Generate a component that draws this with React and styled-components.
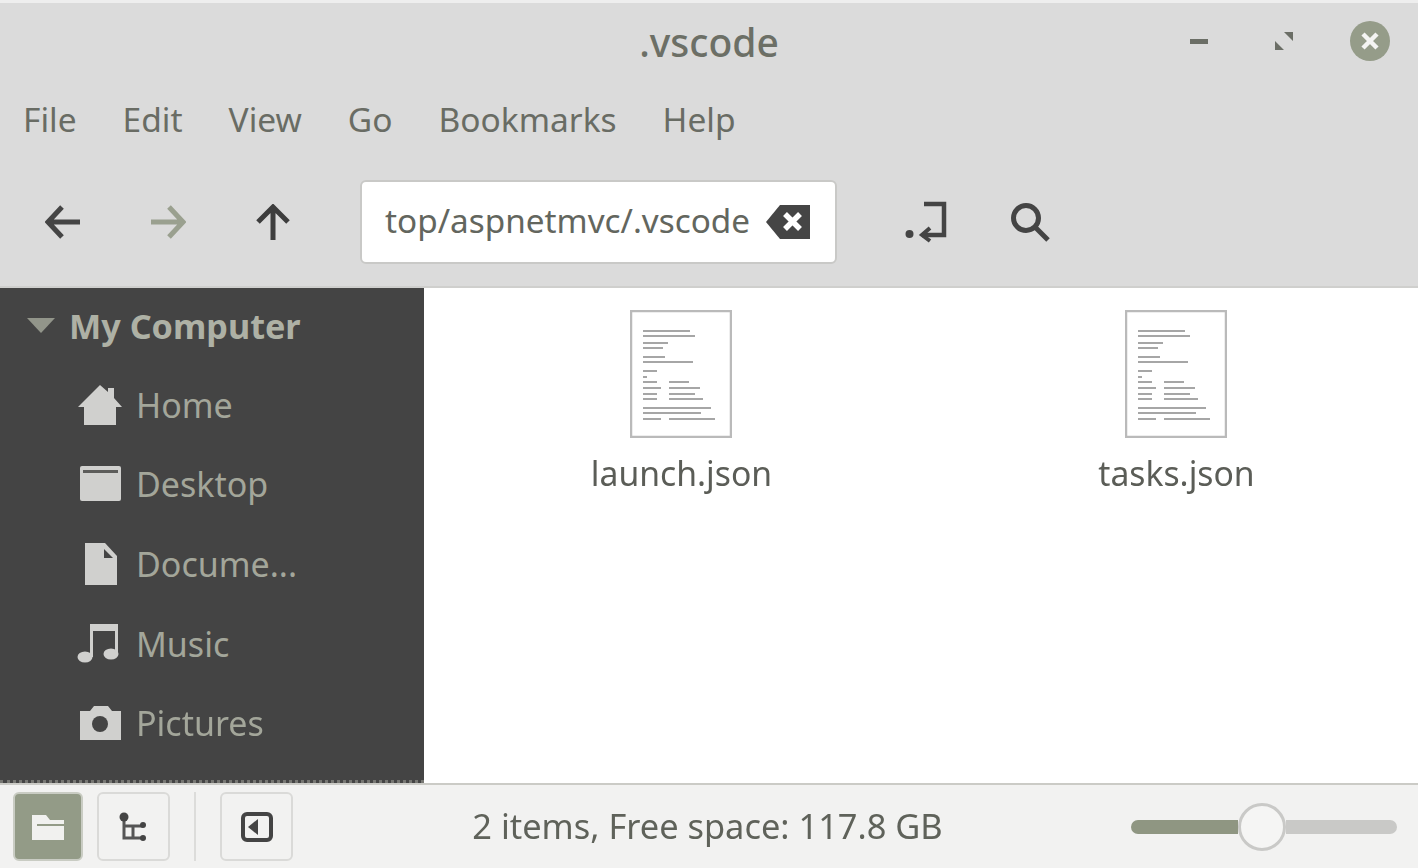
import styled, { createGlobalStyle } from "styled-components";

const GlobalStyle = createGlobalStyle`
  html, body {
    margin: 0;
    padding: 0;
    height: 100%;
    overflow: hidden;
  }
  #root {
    height: 100%;
  }
  * {
    box-sizing: border-box;
  }
`;

const menuItems = ["File", "Edit", "View", "Go", "Bookmarks", "Help"];
const docLines = [
  [13, 21, 47], [13, 26, 52], [13, 33, 25], [13, 38, 20],
  [13, 47, 22], [13, 52, 50],
  [13, 61, 14], [13, 67, 4],
  [13, 72, 14], [39, 72, 20], [13, 78, 18], [39, 78, 31],
  [13, 84, 14], [39, 84, 26], [13, 89, 14], [39, 89, 34],
  [13, 98, 68], [13, 103, 58], [13, 109, 18], [39, 109, 46],
];

function BackIcon() {
  return (
    <svg width="36" height="36" viewBox="0 0 36 36" fill="none" stroke="#454545" strokeWidth="5">
      <path d="M35 18H4M17 3 3 18l14 15" />
    </svg>
  );
}

function ForwardIcon() {
  return (
    <svg width="36" height="36" viewBox="0 0 36 36" fill="none" stroke="#9aa08f" strokeWidth="5">
      <path d="M1 18h31M19 3l14 15-14 15" />
    </svg>
  );
}

function UpIcon() {
  return (
    <svg width="36" height="36" viewBox="0 0 36 36" fill="none" stroke="#3d3d3d" strokeWidth="5">
      <path d="M18 36V4M3 18 18 3l15 15" />
    </svg>
  );
}

function ClearIcon() {
  return (
    <svg width="46" height="36" viewBox="0 0 46 36">
      <path d="M15 1h30v34H15L1 18z" fill="#454545" />
      <path d="M20 10l15 15M35 10 20 25" stroke="#fff" strokeWidth="5.5" />
    </svg>
  );
}

function ToggleIcon() {
  return (
    <svg width="42" height="42" viewBox="0 0 42 42" fill="none" stroke="#444" strokeWidth="4.5">
      <path d="M19 3h20v31H17" />
      <path d="M25 27l-8 7 8 6" strokeWidth="4" />
      <circle cx="4.5" cy="33" r="4" fill="#444" stroke="none" />
    </svg>
  );
}

function SearchIcon() {
  return (
    <svg width="42" height="42" viewBox="0 0 42 42" fill="none" stroke="#444" strokeWidth="5">
      <circle cx="17" cy="17" r="12.5" />
      <path d="M26 26l13 13" />
    </svg>
  );
}

function HomeIcon() {
  return (
    <svg width="46" height="42" viewBox="0 0 46 42" fill="#d0d0ce">
      <path d="M23 1l8 7V4h6v10l8 9h-6v18H7V23H1z" />
    </svg>
  );
}

function DesktopIcon() {
  return (
    <svg width="46" height="42" viewBox="0 0 46 42">
      <rect x="3" y="3" width="41" height="35" rx="2" fill="#d0d0ce" />
      <rect x="6" y="7" width="35" height="3" fill="#5c5c5a" />
    </svg>
  );
}

function DocumentIcon() {
  return (
    <svg width="46" height="42" viewBox="0 0 46 42" fill="#d0d0ce">
      <path d="M8 0h20l12 13v29H8z" />
      <path d="M27 6v9h9z" fill="#444" />
    </svg>
  );
}

function MusicIcon() {
  return (
    <svg width="46" height="42" viewBox="0 0 46 42" fill="#d0d0ce">
      <path d="M13 1h28v30h-3V8H16v26h-3z" />
      <ellipse cx="8" cy="34" rx="7.5" ry="5.5" />
      <ellipse cx="34" cy="31" rx="7.5" ry="5.5" />
    </svg>
  );
}

function CameraIcon() {
  return (
    <svg width="46" height="42" viewBox="0 0 46 42">
      <path d="M3 9h10l4-5h14l4 5h9v29H3z" fill="#d0d0ce" />
      <circle cx="23" cy="22" r="8" fill="#444" />
    </svg>
  );
}

function FolderIcon() {
  return (
    <svg width="34" height="28" viewBox="0 0 34 28" fill="#f1f1ef">
      <path d="M1 2h14l4 5h14v20H1z" />
      <path d="M6 12h27" stroke="#939b87" strokeWidth="2" />
    </svg>
  );
}

function TreeIcon() {
  return (
    <svg width="30" height="30" viewBox="0 0 30 30" fill="none" stroke="#555" strokeWidth="3">
      <path d="M5 5v21h19M5 14h19M14 14v12" />
      <circle cx="5" cy="5" r="4.5" fill="#444" stroke="none" />
      <circle cx="24" cy="13" r="3" fill="#444" stroke="none" />
      <circle cx="24" cy="26" r="3" fill="#444" stroke="none" />
    </svg>
  );
}

function PaneIcon() {
  return (
    <svg width="32" height="30" viewBox="0 0 32 30">
      <rect x="2" y="2" width="28" height="26" rx="4" fill="none" stroke="#444" strokeWidth="4" />
      <path d="M17 7v16L7 15z" fill="#444" />
    </svg>
  );
}

function DocThumb() {
  return (
    <svg width="102" height="128" viewBox="0 0 102 128">
      <rect x="1" y="1" width="100" height="126" fill="#fff" stroke="#bababa" strokeWidth="2.5" />
      {docLines.map(([x, y, w], i) => (
        <rect key={i} x={x} y={y - 1} width={w} height="2" fill="#a6a6a6" />
      ))}
    </svg>
  );
}

const places = [
  { name: "Home", icon: <HomeIcon /> },
  { name: "Desktop", icon: <DesktopIcon /> },
  { name: "Docume...", icon: <DocumentIcon /> },
  { name: "Music", icon: <MusicIcon /> },
  { name: "Pictures", icon: <CameraIcon /> },
];

export default function App() {
  return (
    <Window>
      <GlobalStyle />
      <Header>
        <TitleBar>
          <span />
          <Title>.vscode</Title>
          <WindowControls>
            <Minimize />
            <svg width="18" height="18" viewBox="0 0 18 18" fill="#6b6e66">
              <path d="M9 0h9v9zM9 18H0V9z" />
            </svg>
            <CloseButton>
              <svg width="20" height="20" viewBox="0 0 20 20" stroke="#f4f4f2" strokeWidth="4.5">
                <path d="M3 3l14 14M17 3 3 17" />
              </svg>
            </CloseButton>
          </WindowControls>
        </TitleBar>
        <MenuBar>
          {menuItems.map((item) => (
            <MenuItem key={item}>{item}</MenuItem>
          ))}
        </MenuBar>
        <Toolbar>
          <NavButton><BackIcon /></NavButton>
          <NavButton><ForwardIcon /></NavButton>
          <NavButton><UpIcon /></NavButton>
          <PathBar>
            <PathText>top/aspnetmvc/.vscode</PathText>
            <ClearIcon />
          </PathBar>
          <ToolButton><ToggleIcon /></ToolButton>
          <ToolButton><SearchIcon /></ToolButton>
        </Toolbar>
      </Header>
      <Body>
        <Sidebar>
          <SectionRow>
            <Caret />
            <SectionName>My Computer</SectionName>
          </SectionRow>
          {places.map((place) => (
            <PlaceRow key={place.name}>
              {place.icon}
              <PlaceName>{place.name}</PlaceName>
            </PlaceRow>
          ))}
        </Sidebar>
        <FileGrid>
          <FileItem>
            <DocThumb />
            <FileName>launch.json</FileName>
          </FileItem>
          <FileItem>
            <DocThumb />
            <FileName>tasks.json</FileName>
          </FileItem>
        </FileGrid>
      </Body>
      <Footer>
        <FooterTools>
          <PaneButton $active><FolderIcon /></PaneButton>
          <PaneButton><TreeIcon /></PaneButton>
          <FooterDivider />
          <PaneButton><PaneIcon /></PaneButton>
        </FooterTools>
        <Status>2 items, Free space: 117.8 GB</Status>
        <ZoomSlider>
          <ZoomFill />
          <ZoomThumb />
          <ZoomRest />
        </ZoomSlider>
      </Footer>
    </Window>
  );
}

const Window = styled.div`
  display: flex;
  flex-direction: column;
  height: 100vh;
  font-family: "Noto Sans", sans-serif;
  background-color: #ffffff;
  /* the reference is a soft, upscaled capture */
  filter: blur(0.7px);
`;

const Header = styled.header`
  height: 288px;
  flex-shrink: 0;
  background-color: #dbdbdb;
  border-top: 3px solid #eeeeee;
  border-bottom: 2px solid #cfcfcd;
`;

const TitleBar = styled.div`
  display: grid;
  grid-template-columns: 1fr auto 1fr;
  align-items: center;
  height: 76px;
  padding: 0 28px;
`;

const Title = styled.h1`
  margin: 0;
  font-size: 39px;
  font-weight: 500;
  color: #6c6f66;
`;

const WindowControls = styled.div`
  display: flex;
  align-items: center;
  justify-content: flex-end;
  gap: 57px;
`;

const Minimize = styled.span`
  width: 18px;
  height: 5px;
  margin-right: 10px;
  background-color: #6b6e66;
`;

const CloseButton = styled.span`
  display: flex;
  align-items: center;
  justify-content: center;
  width: 40px;
  height: 40px;
  border-radius: 50%;
  background-color: #959c89;
`;

const MenuBar = styled.nav`
  display: flex;
  align-items: center;
  gap: 46px;
  height: 80px;
  padding-left: 23px;
`;

const MenuItem = styled.span`
  font-size: 33.5px;
  color: #696c64;
`;

const Toolbar = styled.div`
  display: flex;
  align-items: center;
  height: 125px;
  padding-left: 45px;
`;

const NavButton = styled.span`
  display: flex;
  margin-right: 69px;
`;

const PathBar = styled.div`
  display: flex;
  align-items: center;
  justify-content: space-between;
  width: 477px;
  height: 84px;
  margin-right: 68px;
  padding: 0 24px 0 23px;
  background-color: #ffffff;
  border: 2px solid #c9c9c7;
  border-radius: 6px;
`;

const PathText = styled.span`
  margin-bottom: 3px;
  font-size: 33.3px;
  white-space: nowrap;
  color: #63665e;
`;

const ToolButton = styled.span`
  display: flex;
  margin-right: 62px;
`;

const Body = styled.main`
  display: flex;
  flex: 1;
  min-height: 0;
`;

const Sidebar = styled.aside`
  width: 424px;
  flex-shrink: 0;
  padding-top: 6px;
  background-color: #444444;
  border-bottom: 3px dotted #777773;
`;

const SectionRow = styled.div`
  display: flex;
  align-items: center;
  gap: 14px;
  height: 62px;
  padding-left: 27px;
`;

const Caret = styled.span`
  width: 0;
  height: 0;
  border-left: 14px solid transparent;
  border-right: 14px solid transparent;
  border-top: 15px solid #92958a;
`;

const SectionName = styled.span`
  font-size: 34.2px;
  font-weight: 700;
  color: #aeb1a5;
`;

const PlaceRow = styled.div`
  display: flex;
  align-items: center;
  gap: 13px;
  height: 79.6px;
  padding-left: 77px;
  &:nth-child(2) {
    margin-top: 9px;
  }
`;

const PlaceName = styled.span`
  font-size: 34px;
  color: #a3a69a;
`;

const FileGrid = styled.section`
  display: grid;
  grid-template-columns: repeat(2, 495px);
  align-content: start;
  flex: 1;
  padding: 22px 0 0 10px;
`;

const FileItem = styled.div`
  display: flex;
  flex-direction: column;
  align-items: center;
  svg {
    display: block;
    margin-right: 1px;
  }
`;

const FileName = styled.span`
  margin-top: 12px;
  font-size: 33.7px;
  color: #5b5d57;
`;

const Footer = styled.footer`
  display: grid;
  grid-template-columns: 1fr auto 1fr;
  align-items: center;
  height: 85px;
  flex-shrink: 0;
  padding: 0 21px 0 13px;
  background-color: #f2f2f1;
  border-top: 2px solid #cbcbc6;
`;

const FooterTools = styled.div`
  display: flex;
  align-items: center;
  gap: 14px;
`;

const PaneButton = styled.span`
  display: flex;
  align-items: center;
  justify-content: center;
  width: ${(props) => (props.$active ? "70px" : "73px")};
  height: 69px;
  border-radius: 6px;
  border: 2px solid ${(props) => (props.$active ? "#c9ccc3" : "#dadad8")};
  background-color: ${(props) => (props.$active ? "#939b87" : "transparent")};
`;

const FooterDivider = styled.span`
  width: 2px;
  height: 69px;
  margin: 0 10px;
  background-color: #dcdcda;
`;

const Status = styled.span`
  margin: 0 0 2px 5px;
  font-size: 34.4px;
  white-space: nowrap;
  color: #5f625a;
`;

const ZoomSlider = styled.div`
  display: flex;
  align-items: center;
  justify-self: end;
  width: 266px;
`;

const ZoomFill = styled.span`
  width: 107px;
  height: 14px;
  border-radius: 7px 0 0 7px;
  background-color: #8f9682;
`;

const ZoomThumb = styled.span`
  width: 48px;
  height: 48px;
  flex-shrink: 0;
  border-radius: 50%;
  background-color: #f5f5f4;
  border: 3px solid #c9c9c7;
`;

const ZoomRest = styled.span`
  flex: 1;
  height: 14px;
  border-radius: 0 7px 7px 0;
  background-color: #c9c9c7;
`;
